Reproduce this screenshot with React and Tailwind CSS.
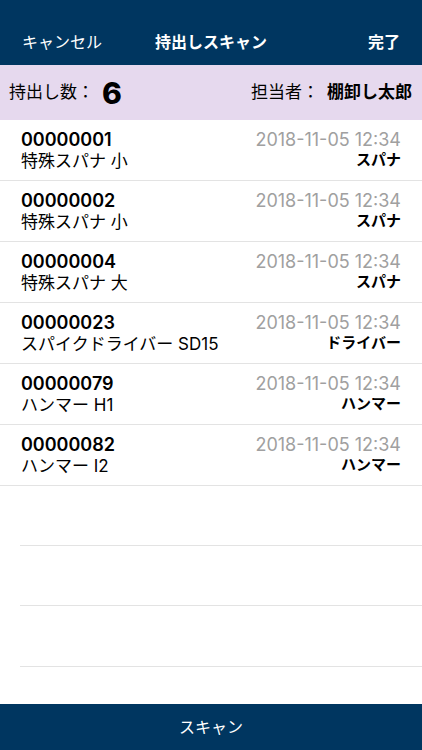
import React from "react";

const items = [
  { id: "00000001", name: "特殊スパナ 小", cat: "スパナ" },
  { id: "00000002", name: "特殊スパナ 小", cat: "スパナ" },
  { id: "00000004", name: "特殊スパナ 大", cat: "スパナ" },
  { id: "00000023", name: "スパイクドライバー SD15", cat: "ドライバー" },
  { id: "00000079", name: "ハンマー H1", cat: "ハンマー" },
  { id: "00000082", name: "ハンマー I2", cat: "ハンマー" },
];

const font = { fontFamily: 'Inter, "Noto Sans CJK JP", sans-serif' };

export default function App() {
  return (
    <div className="w-[422px] h-[750px] flex flex-col bg-white overflow-hidden" style={font}>
      <div className="h-[65px] bg-[#003660] grid grid-cols-3 items-end pb-[13px] px-[22px] text-white text-[16px] leading-[20px]">
        <div className="text-left whitespace-nowrap">キャンセル</div>
        <div className="text-center font-bold whitespace-nowrap">持出しスキャン</div>
        <div className="text-right font-bold">完了</div>
      </div>
      <div className="h-[55px] bg-[#e6d9ee] flex items-center justify-between pl-[9px] pr-[10px] text-black">
        <div className="flex items-center">
          <span className="text-[17px]">持出し数：</span>
          <span className="text-[30px] font-extrabold ml-[8px] leading-none">6</span>
        </div>
        <div className="flex items-center">
          <span className="text-[17px]">担当者：</span>
          <span className="text-[17px] font-bold ml-[8px]">棚卸し太郎</span>
        </div>
      </div>
      <div className="flex-1 flex flex-col">
        {items.map((it) => (
          <div key={it.id} className="h-[61px] border-b border-[#e3e3e3] flex justify-between pl-[21px] pr-[21px] pt-[10px]">
            <div className="flex flex-col">
              <span className="text-[18px] leading-[20px] font-semibold text-black">{it.id}</span>
              <span className="text-[17px] leading-[22px] text-black">{it.name}</span>
            </div>
            <div className="flex flex-col items-end">
              <span className="text-[18px] leading-[20px] text-[#a0a0a0]">2018-11-05 12:34</span>
              <span className="text-[15px] leading-[20px] font-bold text-black">{it.cat}</span>
            </div>
          </div>
        ))}
        <div className="h-[60px] ml-[20px] border-b border-[#e3e3e3]" />
        <div className="h-[60px] ml-[20px] border-b border-[#e3e3e3]" />
        <div className="h-[61px] ml-[20px] border-b border-[#e3e3e3]" />
      </div>
      <div className="h-[46px] bg-[#003660] flex items-center justify-center text-white text-[16px]">
        スキャン
      </div>
    </div>
  );
}
